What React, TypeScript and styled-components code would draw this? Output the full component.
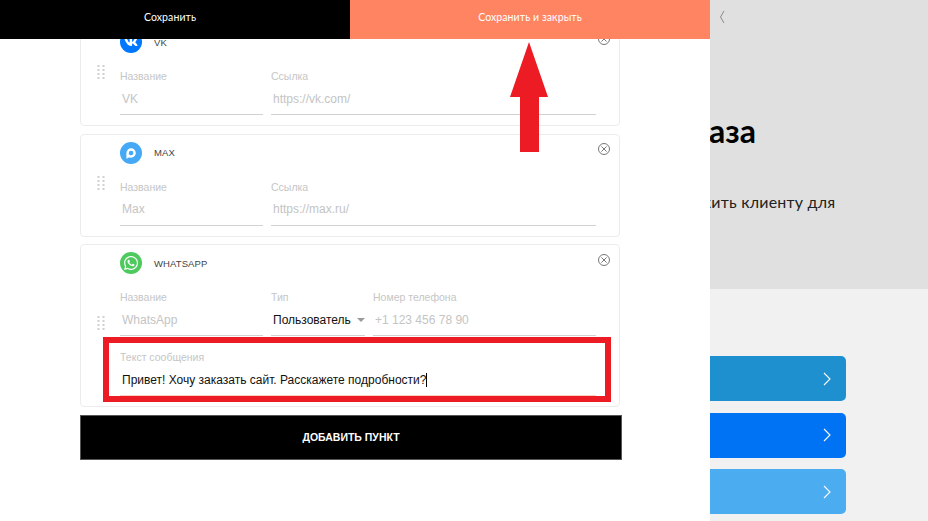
import React, { FC, ReactNode } from 'react';
import styled, { createGlobalStyle } from 'styled-components';
import { FaVk, FaWhatsapp } from 'react-icons/fa';

const GlobalStyle = createGlobalStyle`
  html,
  body {
    margin: 0;
    padding: 0;
    width: 928px;
    height: 521px;
    overflow: hidden;
    background: #fff;
  }
`;

const Page = styled.div`
  position: relative;
  display: flex;
  width: 928px;
  height: 521px;
  overflow: hidden;
  font-family: 'Liberation Sans', Arial, sans-serif;
`;

const EditorPane = styled.div`
  position: relative;
  width: 710px;
  flex-shrink: 0;
  box-sizing: border-box;
  padding: 23px 0 0 80px;
  background: #fff;
`;

const TopBar = styled.div`
  position: absolute;
  z-index: 2;
  top: 0;
  left: 0;
  right: 0;
  display: flex;
  height: 39px;
`;

const TopButton = styled.div<{ $accent?: boolean }>`
  display: flex;
  align-items: center;
  justify-content: center;
  box-sizing: border-box;
  width: ${(p) => (p.$accent ? '360px' : '350px')};
  padding-bottom: 5px;
  padding-right: ${(p) => (p.$accent ? '0' : '10px')};
  background: ${(p) => (p.$accent ? '#ff8562' : '#000')};
  color: #fff;
  font-family: Lato, sans-serif;
  font-size: 10.5px;
  letter-spacing: 0.1px;
`;

const Cards = styled.div`
  display: flex;
  flex-direction: column;
  gap: 7.5px;
  width: 540px;
`;

const Card = styled.div`
  display: flex;
  box-sizing: border-box;
  height: ${(p: { $height: number }) => p.$height}px;
  border: 1px solid #ececec;
  border-radius: 4px;
  background: #fff;
`;

const DragColumn = styled.div`
  display: flex;
  align-items: center;
  justify-content: center;
  width: 39px;
  flex-shrink: 0;
  padding-bottom: 4px;
`;

const CardBody = styled.div`
  flex: 1;
  min-width: 0;
  padding-top: 7px;
`;

const CardHeader = styled.div`
  display: flex;
  align-items: center;
  height: 22px;
  margin-bottom: 13px;
  padding-right: 9px;
`;

const Badge = styled.div<{ $color: string }>`
  display: flex;
  align-items: center;
  justify-content: center;
  width: 22px;
  height: 22px;
  border-radius: 50%;
  background: ${(p) => p.$color};
  color: #fff;
`;

const CardTitle = styled.div`
  flex: 1;
  margin-left: 12px;
  color: #444;
  font-size: 9.5px;
  letter-spacing: 0.1px;
  text-transform: uppercase;
`;

const CloseMark = styled.svg`
  align-self: flex-start;
  margin-top: 1.5px;
`;

const FieldRow = styled.div<{ $columns: string }>`
  display: grid;
  grid-template-columns: ${(p) => p.$columns};
  column-gap: 8px;
  width: 476px;
`;

const Field = styled.div<{ $focused?: boolean }>`
  height: 49px;
  box-sizing: border-box;
  padding-top: 4px;
  border-bottom: 1px solid ${(p) => (p.$focused ? '#fbcfc2' : '#d2d2d2')};
`;

const FieldLabel = styled.div`
  height: 13px;
  color: #c6c6c6;
  font-size: 10.5px;
  line-height: 13px;
`;

const FieldValue = styled.div<{ $filled?: boolean }>`
  display: flex;
  align-items: center;
  height: 31px;
  padding-left: 2px;
  color: ${(p) => (p.$filled ? '#111' : '#c4c4c4')};
  font-size: 12px;
  white-space: nowrap;
`;

const MessageRow = styled.div`
  width: 476px;
  margin-top: 11px;
`;

const TextCursor = styled.span`
  display: inline-block;
  width: 1px;
  height: 14px;
  background: #000;
`;

const SelectCaret = styled.span`
  width: 0;
  height: 0;
  margin-left: 6px;
  border-left: 4px solid transparent;
  border-right: 4px solid transparent;
  border-top: 4px solid #9a9a9a;
`;

const AddButton = styled.div`
  display: flex;
  align-items: center;
  justify-content: center;
  box-sizing: border-box;
  width: 542px;
  height: 45px;
  margin-top: 8px;
  padding-bottom: 2px;
  border: 1px solid #555;
  background: #000;
  color: #fff;
  font-size: 10.5px;
  font-weight: 700;
`;

const PreviewPane = styled.div`
  flex: 1;
  display: flex;
  flex-direction: column;
  overflow: hidden;
  background: #f1f1f1;
`;

const PreviewHero = styled.div`
  height: 289px;
  box-sizing: border-box;
  padding-top: 114px;
  background: #e0e0e0;
`;

const PreviewTitle = styled.div`
  margin-left: -49px;
  color: #000;
  font-family: Lato, sans-serif;
  font-size: 32px;
  font-weight: 700;
  line-height: 34px;
  white-space: nowrap;
`;

const PreviewText = styled.div`
  margin: 44px 0 0 -67px;
  color: #222;
  font-family: Lato, sans-serif;
  font-size: 16px;
  letter-spacing: 0.2px;
  line-height: 20px;
  white-space: nowrap;
`;

const MessengerList = styled.div`
  display: flex;
  flex-direction: column;
  gap: 11.5px;
  margin-top: 67px;
`;

const MessengerButton = styled.div<{ $color: string }>`
  display: flex;
  align-items: center;
  justify-content: flex-end;
  box-sizing: border-box;
  width: 136px;
  height: 45px;
  padding-right: 15px;
  border-radius: 0 5px 5px 0;
  background: ${(p) => p.$color};
`;

const Annotation = styled.div`
  position: absolute;
  z-index: 3;
  left: 103px;
  top: 337px;
  box-sizing: border-box;
  width: 508px;
  height: 65px;
  border: 6px solid #ed1c24;
`;

const ArrowMark = styled.svg`
  position: absolute;
  z-index: 3;
  left: 510px;
  top: 42px;
`;

const BackMark = styled.svg`
  position: absolute;
  z-index: 3;
  left: 719px;
  top: 10px;
`;

const DragHandle: FC = () => (
  <svg width="8" height="15" viewBox="0 0 8 15" fill="#d0d0d0">
    {[0, 4, 8, 12].map((y) => (
      <g key={y}>
        <rect x="0.5" y={y} width="2" height="2" />
        <rect x="5.5" y={y} width="2" height="2" />
      </g>
    ))}
  </svg>
);

const CloseIcon: FC = () => (
  <CloseMark width="12" height="12" viewBox="0 0 12 12" fill="none" stroke="#555" strokeWidth="0.8">
    <circle cx="6" cy="6" r="5.5" />
    <path d="M3.4 3.4l5.2 5.2M8.6 3.4l-5.2 5.2" />
  </CloseMark>
);

const MaxIcon: FC = () => (
  <svg width="14" height="14" viewBox="0 0 14 14" fill="none" stroke="#fff" strokeWidth="2.4">
    <path d="M3.6 10.8V7a3.5 3.5 0 1 1 3.5 3.5c-.8 0-1.4-.2-1.9-.6L3.6 10.8z" />
  </svg>
);

const Chevron: FC = () => (
  <svg width="8" height="14" viewBox="0 0 8 14" fill="none" stroke="#fff" strokeWidth="1.1">
    <path d="M1 1l6 6-6 6" />
  </svg>
);

interface MessengerCardProps {
  title: string;
  color: string;
  icon: ReactNode;
  height: number;
  children: ReactNode;
}

const MessengerCard: FC<MessengerCardProps> = ({ title, color, icon, height, children }) => (
  <Card $height={height}>
    <DragColumn>
      <DragHandle />
    </DragColumn>
    <CardBody>
      <CardHeader>
        <Badge $color={color}>{icon}</Badge>
        <CardTitle>{title}</CardTitle>
        <CloseIcon />
      </CardHeader>
      {children}
    </CardBody>
  </Card>
);

const App: FC = () => {
  return (
    <Page>
      <GlobalStyle />
      <EditorPane>
        <TopBar>
          <TopButton>Сохранить</TopButton>
          <TopButton $accent>Сохранить и закрыть</TopButton>
        </TopBar>
        <Cards>
          <MessengerCard title="VK" color="#0077ff" icon={<FaVk size={14} />} height={103}>
            <FieldRow $columns="143px 325px">
              <Field>
                <FieldLabel>Название</FieldLabel>
                <FieldValue>VK</FieldValue>
              </Field>
              <Field>
                <FieldLabel>Ссылка</FieldLabel>
                <FieldValue>https://vk.com/</FieldValue>
              </Field>
            </FieldRow>
          </MessengerCard>
          <MessengerCard title="Max" color="#45a9f5" icon={<MaxIcon />} height={103}>
            <FieldRow $columns="143px 325px">
              <Field>
                <FieldLabel>Название</FieldLabel>
                <FieldValue>Max</FieldValue>
              </Field>
              <Field>
                <FieldLabel>Ссылка</FieldLabel>
                <FieldValue>https://max.ru/</FieldValue>
              </Field>
            </FieldRow>
          </MessengerCard>
          <MessengerCard title="WhatsApp" color="#4dc95e" icon={<FaWhatsapp size={16} />} height={163}>
            <FieldRow $columns="143px 94px 223px">
              <Field>
                <FieldLabel>Название</FieldLabel>
                <FieldValue>WhatsApp</FieldValue>
              </Field>
              <Field>
                <FieldLabel>Тип</FieldLabel>
                <FieldValue $filled>
                  Пользователь
                  <SelectCaret />
                </FieldValue>
              </Field>
              <Field>
                <FieldLabel>Номер телефона</FieldLabel>
                <FieldValue>+1 123 456 78 90</FieldValue>
              </Field>
            </FieldRow>
            <MessageRow>
              <Field $focused>
                <FieldLabel>Текст сообщения</FieldLabel>
                <FieldValue $filled>
                  Привет! Хочу заказать сайт. Расскажете подробности?
                  <TextCursor />
                </FieldValue>
              </Field>
            </MessageRow>
          </MessengerCard>
        </Cards>
        <AddButton>ДОБАВИТЬ ПУНКТ</AddButton>
      </EditorPane>
      <PreviewPane>
        <PreviewHero>
          <PreviewTitle>заказа</PreviewTitle>
          <PreviewText>предложить клиенту для</PreviewText>
        </PreviewHero>
        <MessengerList>
          <MessengerButton $color="#1e90d0">
            <Chevron />
          </MessengerButton>
          <MessengerButton $color="#0073f5">
            <Chevron />
          </MessengerButton>
          <MessengerButton $color="#4bacf0">
            <Chevron />
          </MessengerButton>
        </MessengerList>
      </PreviewPane>
      <BackMark width="6" height="14" viewBox="0 0 6 14" fill="none" stroke="#8a8a8a" strokeWidth="1">
        <path d="M5 1L1.5 7 5 13" />
      </BackMark>
      <Annotation />
      <ArrowMark width="38" height="110" viewBox="0 0 38 110" fill="#ed1c24">
        <path d="M19 0L38 55H29V110H10V55H0z" />
      </ArrowMark>
    </Page>
  );
};

export default App;
